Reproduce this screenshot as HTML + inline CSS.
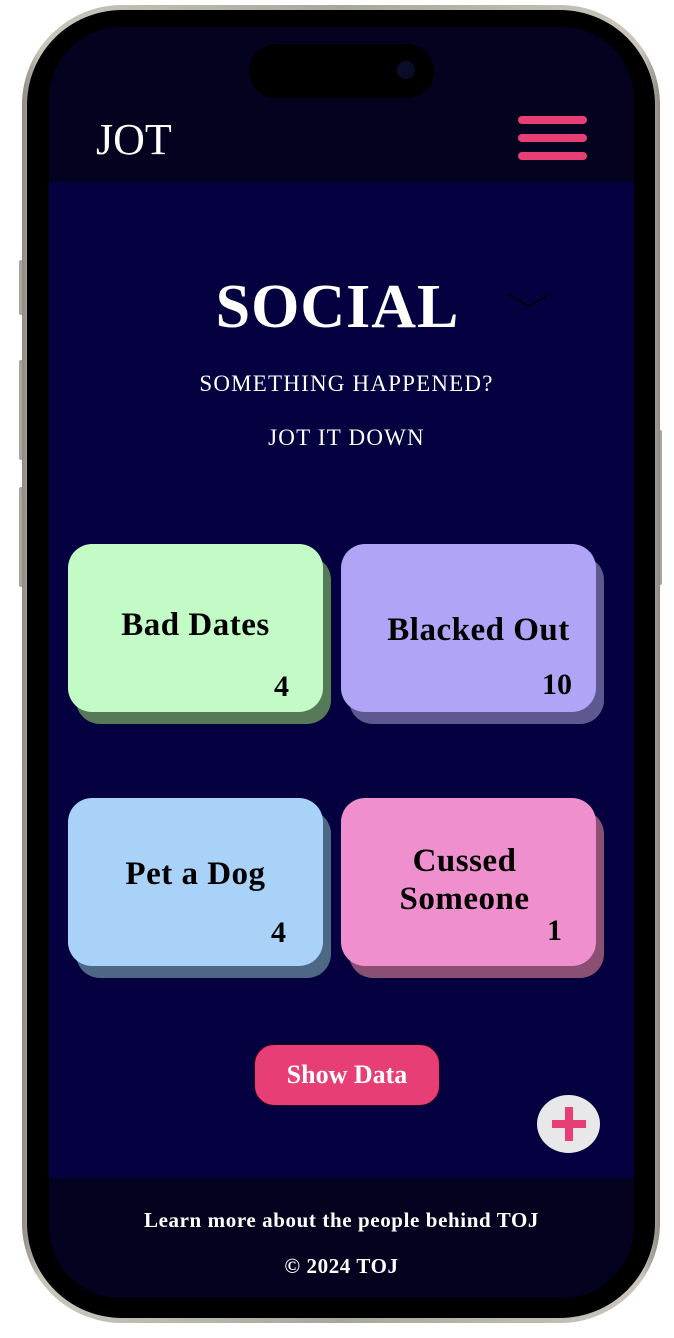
<!DOCTYPE html>
<html><head><meta charset="utf-8"><style>
*{margin:0;padding:0;box-sizing:border-box}
body{width:674px;height:1338px;background:#fff;position:relative;overflow:hidden;font-family:"Liberation Serif",serif}
.a{position:absolute}
.frame{left:22px;top:5px;width:638px;height:1318px;border-radius:100px;background:linear-gradient(90deg,#8e8b82,#c9c6bc 3%,#a9a69c 50%,#c9c6bc 97%,#8e8b82);}
.bezel{left:27px;top:10px;width:628px;height:1308px;border-radius:95px;background:#000}
.screen{left:49px;top:27px;width:585px;height:1271px;border-radius:72px;overflow:hidden;background:#05003f}
.btn{background:#a9a69c;border-radius:2px}
.card{position:absolute;width:255px;height:168px;border-radius:24px;color:#000;font-weight:bold;text-align:center}
.sh{position:absolute;width:255px;height:168px;border-radius:24px}
.lbl{position:absolute;left:0;right:0;font-size:33px;line-height:38px;letter-spacing:0.5px}
.num{position:absolute;right:34px;font-size:30px}
</style></head><body>
<div class="a btn" style="left:19px;top:260px;width:5px;height:55px"></div>
<div class="a btn" style="left:19px;top:360px;width:5px;height:100px"></div>
<div class="a btn" style="left:19px;top:487px;width:5px;height:100px"></div>
<div class="a btn" style="left:657px;top:430px;width:5px;height:155px"></div>
<div class="a frame"></div>
<div class="a bezel"></div>
<div class="a screen">
  <div class="a" style="left:0;top:0;width:585px;height:155px;background:#03031f"></div>
  <div class="a" style="left:200px;top:17px;width:185px;height:54px;border-radius:27px;background:#000"></div>
  <div class="a" style="left:348px;top:34px;width:18px;height:18px;border-radius:50%;background:#0b0b2a"></div>
  <div class="a" style="left:47px;top:88px;color:#fff;font-size:44px;line-height:50px">JOT</div>
  <div class="a" style="left:469px;top:89px;width:69px;height:8px;border-radius:4px;background:#e83e76"></div>
  <div class="a" style="left:469px;top:107px;width:69px;height:8px;border-radius:4px;background:#e83e76"></div>
  <div class="a" style="left:469px;top:125px;width:69px;height:8px;border-radius:4px;background:#e83e76"></div>

  <div class="a" style="left:0;width:585px;top:244px;text-align:center;color:#fff;font-weight:bold;font-size:62px;line-height:72px;padding-right:8px;letter-spacing:1px">SOCIAL</div>
  <svg class="a" style="left:457px;top:264px" width="46" height="20"><path d="M2 3 L23 15 L44 3" stroke="#000" stroke-width="1.5" fill="none"/></svg>
  <div class="a" style="left:0;width:585px;top:344px;text-align:center;color:#fff;font-size:23px;padding-left:10px;letter-spacing:1.2px">SOMETHING HAPPENED?</div>
  <div class="a" style="left:0;width:585px;top:398px;text-align:center;color:#fff;font-size:23px;padding-left:10px;letter-spacing:1.2px">JOT IT DOWN</div>

  <div class="sh" style="left:27px;top:529px;background:#567a58"></div>
  <div class="card" style="left:19px;top:517px;background:#c3fbc7"><div class="lbl" style="top:62px">Bad Dates</div><div class="num" style="top:126px">4</div></div>
  <div class="sh" style="left:300px;top:529px;background:#5d5990"></div>
  <div class="card" style="left:292px;top:517px;background:#b0a4f7"><div class="lbl" style="top:67px;padding-left:20px">Blacked Out</div><div class="num" style="top:124px;right:24px">10</div></div>
  <div class="sh" style="left:27px;top:783px;background:#4e6785"></div>
  <div class="card" style="left:19px;top:771px;background:#a8d2f8"><div class="lbl" style="top:57px">Pet a Dog</div><div class="num" style="top:118px;right:37px">4</div></div>
  <div class="sh" style="left:300px;top:783px;background:#8c4f74"></div>
  <div class="card" style="left:292px;top:771px;background:#ef8fcd"><div class="lbl" style="top:44px;padding-right:8px">Cussed<br>Someone</div><div class="num" style="top:116px;right:34px">1</div></div>

  <div class="a" style="left:205px;top:1017px;width:186px;height:62px;border-radius:20px;background:#e83e76;border:1px solid #2a0018;color:#fff;font-weight:bold;font-size:26px;text-align:center;line-height:60px">Show Data</div>
  <div class="a" style="left:488px;top:1068px;width:63px;height:58px;border-radius:50%;background:#e8e8ea"></div>
  <div class="a" style="left:516px;top:1080px;width:8px;height:34px;background:#e83e76"></div>
  <div class="a" style="left:503px;top:1093px;width:34px;height:8px;background:#e83e76"></div>

  <div class="a" style="left:0;top:1151px;width:585px;height:120px;background:#030320"></div>
  <div class="a" style="left:0;width:585px;top:1181px;text-align:center;color:#fff;font-weight:bold;font-size:21px;letter-spacing:0.6px">Learn more about the people behind TOJ</div>
  <div class="a" style="left:0;width:585px;top:1227px;text-align:center;color:#fff;font-weight:bold;font-size:21px;letter-spacing:0.6px">© 2024 TOJ</div>
</div>
</body></html>
